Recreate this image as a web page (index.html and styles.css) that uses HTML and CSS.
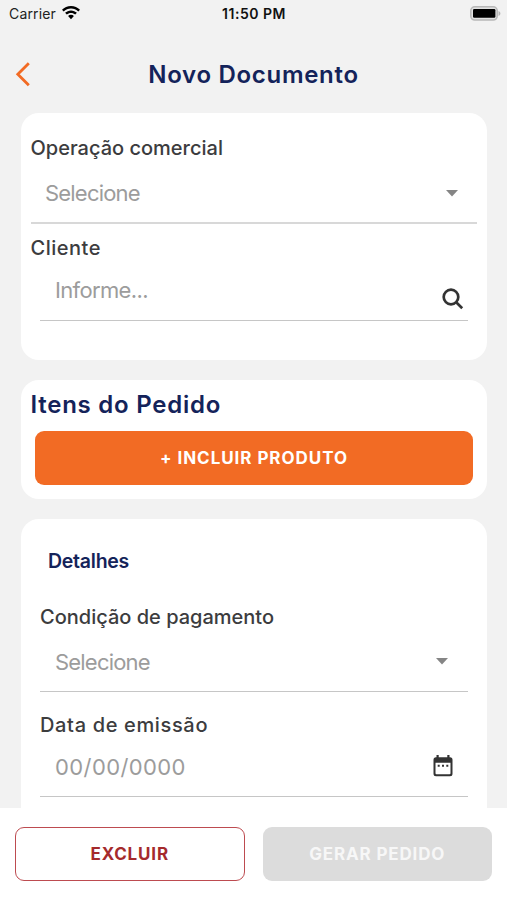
FILE: index.html
```html
<!DOCTYPE html>
<html lang="pt-BR">
<head>
<meta charset="utf-8">
<title>Novo Documento</title>
<link rel="stylesheet" href="styles.css">
</head>
<body>
<div class="screen">
  <div class="status">
    <div class="carrier"><span class="carrier-name">Carrier</span>
      <svg class="wifi" viewBox="0 0 18 14"><path d="M9 0C5.500 0 2.300 1.400 0 3.700L1.700 5.500C3.600 3.600 6.200 2.500 9 2.500s5.400 1.100 7.300 3L18 3.700C15.700 1.400 12.500 0 9 0zM9 4.400C6.700 4.400 4.600 5.300 3.100 6.800L4.800 8.600C5.900 7.500 7.400 6.900 9 6.900s3.100.6 4.200 1.700l1.700-1.800C13.400 5.300 11.300 4.400 9 4.400zM9 8.800c-1.100 0-2.100.4-2.900 1.200L9 13.200l2.900-3.200C11.100 9.200 10.100 8.800 9 8.800z"/></svg>
    </div>
    <span class="time">11:50 PM</span>
    <svg class="battery" viewBox="0 0 31 15"><rect x=".8" y=".8" width="26.400" height="13.200" rx="4" fill="#e2e2e2" stroke="#b8b8b8" stroke-width="1.600"/><rect x="3" y="3" width="22.400" height="8.800" rx="1.200"/><path d="M28.500 5v5c1.200-.4 1.900-1.400 1.900-2.500S29.700 5.400 28.500 5z" fill="#b4b4b4"/></svg>
  </div>
  <header class="header">
    <svg class="back" viewBox="0 0 16 26"><path d="M13.800 2.200 2.800 13.200l11 11"/></svg>
    <h1 class="title">Novo Documento</h1>
  </header>
  <main class="content">
    <section class="card card-client">
      <label class="label label-op">Operação comercial</label>
      <div class="field field-op"><span class="placeholder">Selecione</span><svg class="caret" viewBox="0 0 12 7"><path d="M0 0h12L6 6.500z"/></svg></div>
      <label class="label label-client">Cliente</label>
      <div class="field field-client"><span class="placeholder inform">Informe...</span><svg class="search" viewBox="0 0 22 22"><circle cx="9" cy="9" r="7.300"/><path d="m14.200 14.200 6 6"/></svg></div>
    </section>
    <section class="card card-items">
      <h2 class="items-title">Itens do Pedido</h2>
      <button class="button add"><span>+ INCLUIR PRODUTO</span></button>
    </section>
    <section class="card card-details">
      <h3 class="details-title">Detalhes</h3>
      <label class="label label-pay">Condição de pagamento</label>
      <div class="field field-pay"><span class="placeholder">Selecione</span><svg class="caret" viewBox="0 0 12 7"><path d="M0 0h12L6 6.500z"/></svg></div>
      <label class="label label-date">Data de emissão</label>
      <div class="field field-date"><span class="placeholder date">00/00/0000</span><svg class="calendar" viewBox="0 0 20 22"><path fill-rule="evenodd" d="M3.500 0h2.200v2.200h8.600V0h2.200v2.200h.5a2.500 2.500 0 0 1 2.500 2.500v14a2.500 2.500 0 0 1-2.500 2.500H3A2.500 2.500 0 0 1 .5 18.700v-14A2.500 2.500 0 0 1 3 2.200h.5zM2.500 7.700v10.500a1 1 0 0 0 1 1h13a1 1 0 0 0 1-1V7.700z"/><path d="M4.700 9.700h2v2h-2zM9 9.700h2v2H9zM13.300 9.700h2v2h-2z"/></svg></div>
    </section>
  </main>
  <footer class="footer">
    <button class="button delete"><span>EXCLUIR</span></button>
    <button class="button submit"><span>GERAR PEDIDO</span></button>
  </footer>
</div>
</body>
</html>
```
FILE: styles.css
```css
* { box-sizing: border-box; margin: 0; }
body { font-family: Inter, "Liberation Sans", sans-serif; background: #f2f2f2; }
svg { display: block; flex: none; }
.screen { height: 900px; display: flex; flex-direction: column; overflow: hidden; }
.status { height: 28px; flex: none; display: grid; grid-template-columns: 1fr auto 1fr; padding: 0 6px 0 9px; align-items: center; font-size: 14px; line-height: 28px; color: #222; }
.carrier { display: flex; align-items: center; gap: 6px; }
.carrier-name { letter-spacing: .15px; }
.wifi { width: 18px; height: 14px; margin-top: -2px; fill: #000; }
.time { font-weight: 600; letter-spacing: .5px; color: #111; margin-left: -2px; }
.battery { width: 31px; height: 15px; margin-top: -2px; justify-self: end; }
.header { height: 85px; flex: none; display: grid; grid-template-columns: 40px 1fr 40px; padding: 0 0 0 15px; }
.back { width: 16px; height: 26px; margin-top: 33px; fill: none; stroke: #f26b24; stroke-width: 2.800; }
.title { margin-top: 31px; line-height: 32px; font-size: 24px; font-weight: 600; color: #14235a; text-align: center; white-space: nowrap; padding-right: 15px; letter-spacing: .7px; }
.content { flex: 1; min-height: 0; overflow: hidden; padding: 0 20px 0 21px; display: flex; flex-direction: column; gap: 20px; }
.card { flex: none; background: #fff; border-radius: 18px; display: flex; flex-direction: column; align-items: stretch; }
.card-client { height: 247px; padding: 22px 10px 0 9.500px; }
.label { display: block; height: 26px; line-height: 26px; font-size: 20px; font-weight: 500; color: #3c3c3e; white-space: nowrap; }
.field { display: flex; justify-content: space-between; align-items: center; border-bottom: 1px solid #c6c6c6; }
.placeholder { font-size: 22px; line-height: 28px; color: #9c9c9c; white-space: nowrap; letter-spacing: -.8px; }
.caret { width: 12px; height: 7px; fill: #858585; }
.field-op { height: 62px; padding: 2px 19px 0 14.500px; border-bottom: 2px solid #d8d8d8; margin-top: 1px; }
.label-client { margin-top: 11px; letter-spacing: .5px; }
.field-client { height: 60px; margin: 0 9px 0 9.500px; padding: 1px 4px 0 15px; }
.placeholder.inform { margin-top: -3px; letter-spacing: -.65px; }
.search { width: 22px; height: 22px; margin-top: 16px; fill: none; stroke: #333; stroke-width: 2.700; }
.card-items { height: 119px; padding: 8px 10px; }
.items-title { line-height: 34px; font-size: 24px; font-weight: 600; color: #14235a; white-space: nowrap; letter-spacing: .75px; margin-left: -.5px; }
.button { font-family: inherit; height: 54px; border: 0; border-radius: 9px; font-size: 17px; font-weight: 700; padding: 0; white-space: nowrap; letter-spacing: .85px; }
.add { margin: 9px 4px 0; background: #f26b24; color: #fff; letter-spacing: .95px; }
.card-details { height: 420px; padding: 28px 19px 0; }
.details-title { padding-left: 8px; line-height: 28px; font-size: 19.500px; font-weight: 600; color: #14235a; letter-spacing: -.25px; }
.label-pay { margin-top: 29px; }
.field-pay { height: 62px; padding: 2px 20px 0 15px; }
.label-date { margin-top: 20px; letter-spacing: .65px; }
.field-date { height: 59px; padding: 0 15px; }
.placeholder.date { letter-spacing: .4px; }
.calendar { width: 20px; height: 22px; margin-top: -2px; fill: #333; }
.footer { height: 92px; flex: none; background: #fff; display: grid; grid-template-columns: 1fr 1fr; gap: 18px; padding: 19px 15px 0; align-items: start; }
.delete { border: 1.500px solid #bd4b50; background: #fff; color: #a52a2c; }
.submit { background: #dcdcdc; color: #f7f7f7; }
```
